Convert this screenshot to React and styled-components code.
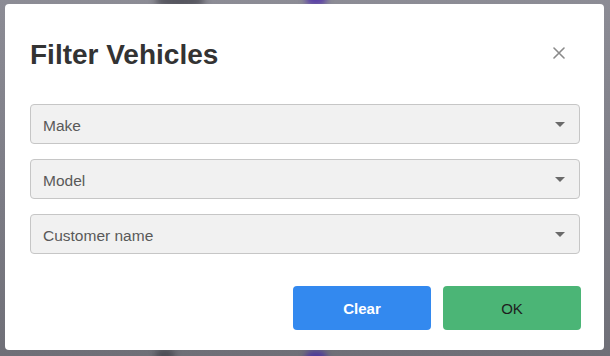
import React, { useState } from 'react';
import styled, { createGlobalStyle } from 'styled-components';

const GlobalStyle = createGlobalStyle`
  html, body {
    margin: 0;
    padding: 0;
  }
  body {
    font-family: "Liberation Sans", Arial, sans-serif;
  }
`;

const fields = ['Make', 'Model', 'Customer name'];

const App = () => {
  const [values, setValues] = useState({});

  return (
    <>
      <GlobalStyle />
      <Backdrop>
        <Blob $x={155} $y={-6} $w={50} $color="#55555e" />
        <Blob $x={305} $y={-8} $w={22} $color="#5a3fa8" />
        <Blob $x={155} $y={348} $w={20} $color="#4e4e56" />
        <Blob $x={305} $y={350} $w={22} $color="#4f3a9a" />
        <Dialog>
          <Header>
            <Title>Filter Vehicles</Title>
            <CloseButton type="button" aria-label="Close">
              <svg width="12" height="12" viewBox="0 0 12 12">
                <path d="M1 1L11 11M11 1L1 11" stroke="#8a8a8a" strokeWidth="1.6" strokeLinecap="round" />
              </svg>
            </CloseButton>
          </Header>

          <Fields>
            {fields.map((f) => (
              <Select key={f} onClick={() => setValues({ ...values, [f]: !values[f] })}>
                <SelectLabel>{f}</SelectLabel>
                <Caret />
              </Select>
            ))}
          </Fields>

          <Footer>
            <Button type="button" $variant="blue">Clear</Button>
            <Button type="button" $variant="green">OK</Button>
          </Footer>
        </Dialog>
      </Backdrop>
    </>
  );
};

export default App;

const Backdrop = styled.div`
  position: relative;
  width: 610px;
  height: 356px;
  box-sizing: border-box;
  padding: 4px 6px 6px 5px;
  display: flex;
  overflow: hidden;
  background: linear-gradient(180deg, #8c8c95 0%, #7d7d86 50%, #6f6f77 100%);
`;

const Blob = styled.div`
  position: absolute;
  left: ${(p) => p.$x}px;
  top: ${(p) => p.$y}px;
  width: ${(p) => p.$w}px;
  height: 14px;
  border-radius: 50%;
  background: ${(p) => p.$color};
  filter: blur(3px);
`;

const Dialog = styled.div`
  position: relative;
  flex: 1;
  background: #ffffff;
  border-radius: 4px;
  padding: 35px 24px 20px 25px;
  display: flex;
  flex-direction: column;
`;

const Header = styled.div`
  display: flex;
  align-items: center;
  justify-content: space-between;
  height: 32px;
`;

const Title = styled.h2`
  margin: 0;
  font-size: 28px;
  line-height: 32px;
  font-weight: 700;
  color: #333333;
`;

const CloseButton = styled.button`
  display: flex;
  align-items: center;
  justify-content: center;
  width: 24px;
  height: 24px;
  margin-right: 9px;
  margin-top: -4px;
  padding: 0;
  border: none;
  background: none;
  cursor: pointer;
`;

const Fields = styled.div`
  display: flex;
  flex-direction: column;
  gap: 15px;
  margin-top: 33px;
`;

const Select = styled.div`
  display: flex;
  align-items: center;
  justify-content: space-between;
  height: 40px;
  box-sizing: border-box;
  padding: 3px 14px 0 12px;
  background: #f1f1f1;
  border: 1px solid #c6c6c6;
  border-radius: 4px;
  cursor: pointer;
`;

const SelectLabel = styled.span`
  font-size: 15.5px;
  color: #595959;
`;

const Caret = styled.span`
  width: 0;
  height: 0;
  margin-top: -3px;
  border-left: 5px solid transparent;
  border-right: 5px solid transparent;
  border-top: 5px solid #6a6a6a;
`;

const Footer = styled.div`
  display: flex;
  justify-content: flex-end;
  gap: 12px;
  margin-top: auto;
  margin-right: -1px;
`;

const Button = styled.button`
  width: 138px;
  height: 44px;
  border: none;
  border-radius: 4px;
  font-family: "Liberation Sans", Arial, sans-serif;
  font-size: 15px;
  font-weight: ${(p) => (p.$variant === 'blue' ? 700 : 400)};
  background: ${(p) => (p.$variant === 'blue' ? '#3389ef' : '#4bb576')};
  color: ${(p) => (p.$variant === 'blue' ? '#ffffff' : '#1e1e1e')};
  cursor: pointer;
`;
